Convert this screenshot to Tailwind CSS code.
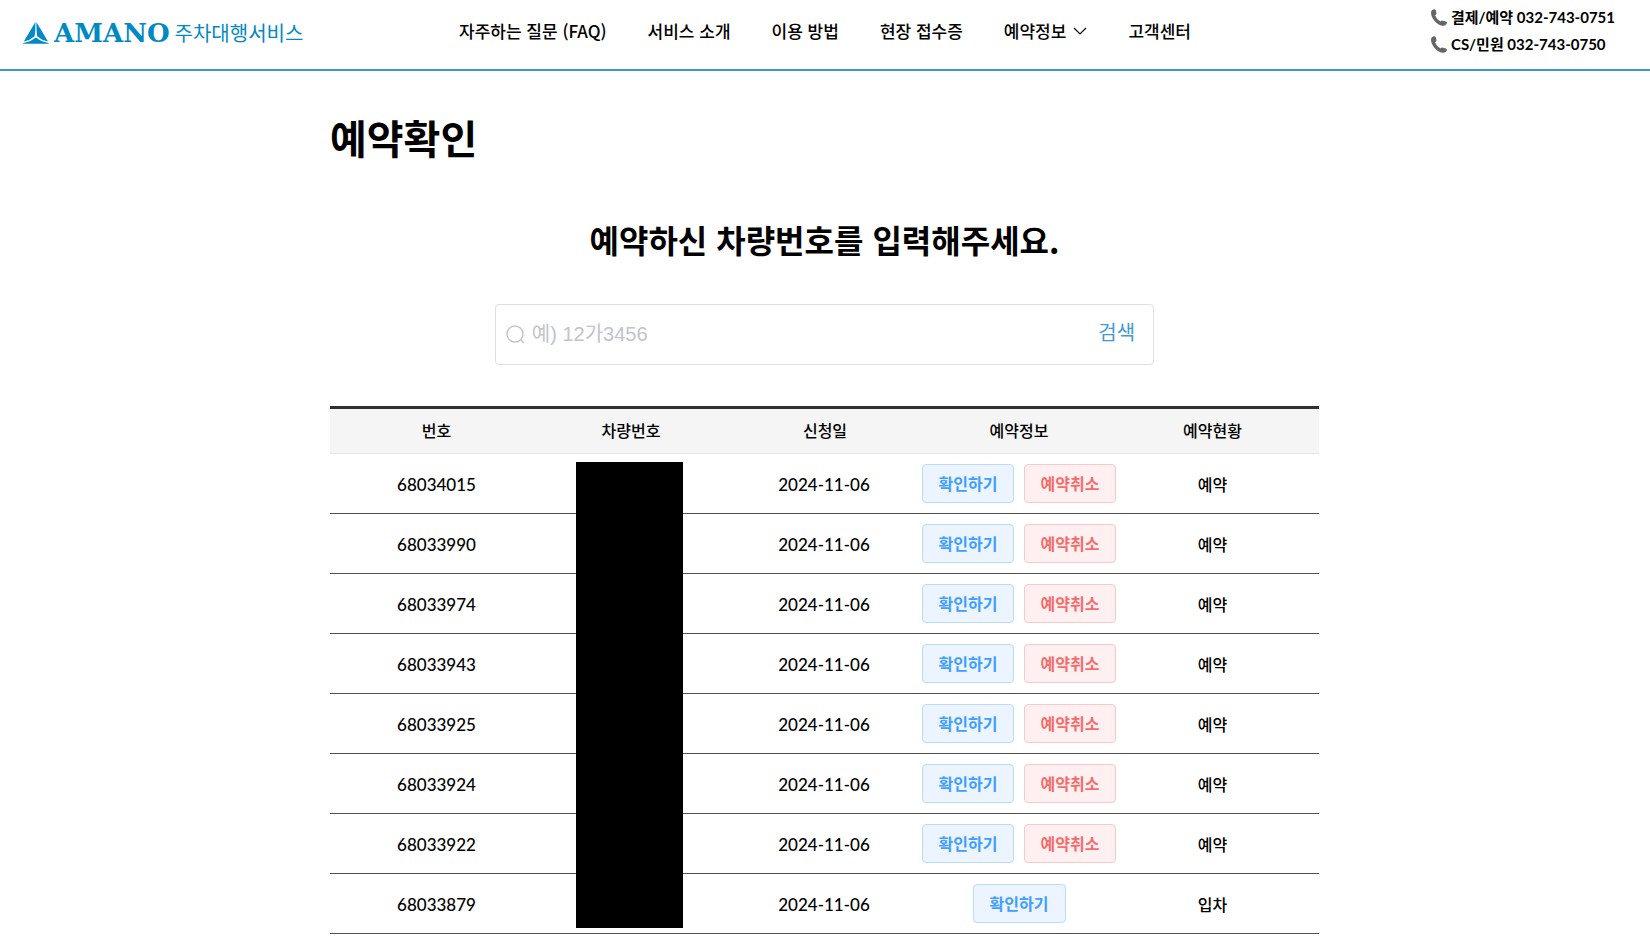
<!DOCTYPE html>
<html lang="ko">
<head>
<meta charset="utf-8">
<title>예약확인</title>
<script src="https://cdn.jsdelivr.net/npm/@tailwindcss/browser@4"></script>
</head>
<body class="bg-white text-black font-['Noto_Sans_CJK_KR',sans-serif]">
<header class="grid grid-cols-[1fr_auto_1fr] items-center h-[71px] border-b-2 border-[#3f94d1] px-[23px]">
  <a href="#" class="flex items-center gap-[5px] pb-1 text-[#0089c4]">
    <svg class="w-[26px] h-[22px]" viewBox="0 0 26 22" fill="currentColor" aria-hidden="true">
      <path d="M12.400 0L0.800 19.600Q7.500 18 11.600 14.200Q12.600 8 12.400 0Z"/>
      <path d="M13.400 0Q13.200 8 14.200 14.200Q18.300 18 25 19.600Z"/>
      <path d="M0 21.800L0.500 20.900Q8 19.400 12.900 15.400Q17.800 19.400 25.400 20.900L26 21.800Z"/>
    </svg>
    <span class="font-['DejaVu_Serif',serif] font-bold text-[26px] leading-8">AMANO</span>
    <span class="text-[20px] leading-8">주차대행서비스</span>
  </a>
  <nav class="flex items-center gap-[41px] text-[17px] leading-6 font-medium pb-2">
    <a href="#">자주하는 질문 (FAQ)</a>
    <a href="#">서비스 소개</a>
    <a href="#">이용 방법</a>
    <a href="#">현장 접수증</a>
    <a href="#" class="flex items-center gap-[7px]">예약정보
      <svg class="w-[14px] h-2" viewBox="0 0 14 8" fill="none" stroke="currentColor" stroke-width="1.1" aria-hidden="true"><path d="M1 1L7 7L13 1"/></svg>
    </a>
    <a href="#">고객센터</a>
  </nav>
  <address class="not-italic justify-self-end pr-3 pb-2 text-[15px] leading-[27px] font-bold font-['Lato','Noto_Sans_CJK_KR',sans-serif]">
    <div class="flex items-center gap-1">
      <svg class="w-4 h-[17px] text-[#666666]" viewBox="0 0 16 17" fill="currentColor" aria-hidden="true"><path d="M1.500 0.700Q3.500 -0.500 4.800 1L5.500 4.500Q5.500 5.700 4 6.300Q5.500 10.500 9.500 12.500Q10.500 11.300 12 11.700L15 12.500Q16.300 13.200 15.700 14.700Q14.500 17 11.500 16.700Q7 16 3.500 12Q0 7.500 0 3.500Q0.100 1.500 1.500 0.700Z"/></svg>
      <a href="tel:032-743-0751">결제/예약 032-743-0751</a>
    </div>
    <div class="flex items-center gap-1">
      <svg class="w-4 h-[17px] text-[#666666]" viewBox="0 0 16 17" fill="currentColor" aria-hidden="true"><path d="M1.500 0.700Q3.500 -0.500 4.800 1L5.500 4.500Q5.500 5.700 4 6.300Q5.500 10.500 9.500 12.500Q10.500 11.300 12 11.700L15 12.500Q16.300 13.200 15.700 14.700Q14.500 17 11.500 16.700Q7 16 3.500 12Q0 7.500 0 3.500Q0.100 1.500 1.500 0.700Z"/></svg>
      <a href="tel:032-743-0750">CS/민원 032-743-0750</a>
    </div>
  </address>
</header>

<main class="w-3/5 mx-auto pr-px">
  <h1 class="pt-9 text-[40px] leading-[60px] font-bold">예약확인</h1>
  <h2 class="pt-12 text-[32px] leading-[48px] font-bold text-center">예약하신 차량번호를 입력해주세요.</h2>

  <form class="flex items-center w-2/3 h-[61px] mx-auto mt-[41px] pl-[10px] pr-[18px] gap-[7px] border border-[#dcdfe6] rounded">
    <svg class="w-[19px] h-[19px] shrink-0" viewBox="0 0 19 19" fill="none" stroke="#c0c4cc" stroke-width="1.4" aria-hidden="true"><circle cx="9" cy="9" r="8"/><path d="M14.500 14.500L18 18"/></svg>
    <input type="text" aria-label="차량번호" placeholder="예) 12가3456" class="flex-1 min-w-0 h-full outline-none text-[20px] font-['Liberation_Sans','Noto_Sans_CJK_KR',sans-serif] placeholder:text-[#c0c4cc]">
    <button type="submit" class="text-[20px] leading-7 pb-[6px] text-[#4299d5]">검색</button>
  </form>

  <div class="relative mt-[41px]">
    <table class="w-full table-fixed border-collapse text-center">
      <colgroup><col class="w-[204px]"><col class="w-[194px]"><col class="w-[194px]"><col class="w-[194px]"><col class="w-[203px]"></colgroup>
      <thead class="text-[16px] leading-6 bg-[#f5f5f5] border-t-3 border-[#303030]">
        <tr class="h-[46px] border-b border-b-[#e4e4e4]">
          <th scope="col" class="font-medium pl-[9px] pb-[2px]">번호</th>
          <th scope="col" class="font-medium pb-[2px]">차량번호</th>
          <th scope="col" class="font-medium pb-[2px]">신청일</th>
          <th scope="col" class="font-medium pb-[2px]">예약정보</th>
          <th scope="col" class="font-medium pr-[10px] pb-[2px]">예약현황</th>
        </tr>
      </thead>
      <tbody id="rows" class="text-[16px] leading-6 font-medium"></tbody>
    </table>
    <div class="absolute top-[56px] left-[246px] w-[107px] h-[466px] bg-black"></div>
  </div>
</main>

<script>
const ids = ['68034015', '68033990', '68033974', '68033943', '68033925', '68033924', '68033922', '68033879'];
const view = '<button type="button" class="w-[93px] h-[39px] pb-[2px] font-bold rounded border border-[#b9dbff] bg-[#ecf4ff] text-[#409eff]">확인하기</button>';
const cancel = '<button type="button" class="w-[93px] h-[39px] pb-[2px] font-bold rounded border border-[#fbc8c8] bg-[#fef0f0] text-[#f56c6c]">예약취소</button>';
document.getElementById('rows').innerHTML = ids.map((id, i) => {
  const parked = i === ids.length - 1;
  return `<tr class="h-[60px] border-b border-[#505050]">
    <td class="pl-[9px] pt-[2px] text-[17px] font-['Lato',sans-serif]">${id}</td>
    <td></td>
    <td class="pt-[2px] pr-[2px] text-[17px] font-['Lato',sans-serif]">2024-11-06</td>
    <td><div class="flex justify-center gap-[10px]">${view}${parked ? '' : cancel}</div></td>
    <td class="pr-[10px]">${parked ? '입차' : '예약'}</td>
  </tr>`;
}).join('');
</script>
</body>
</html>
